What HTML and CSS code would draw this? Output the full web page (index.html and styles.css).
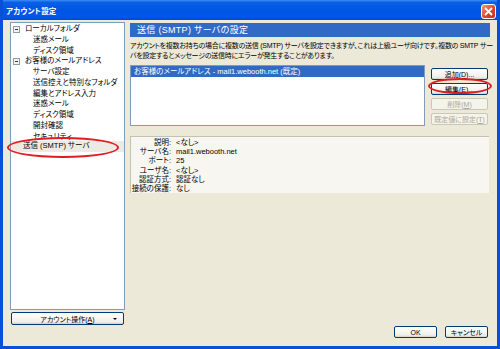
FILE: index.html
```html
<!DOCTYPE html>
<html lang="ja">
<head>
    <meta charset="UTF-8">
    <title>アカウント設定</title>
    <link rel="stylesheet" href="styles.css">
</head>
<body>
    <div class="window">
        <div class="titlebar">
            <span class="title">アカウント設定</span>
            <span class="close">
                <svg width="9" height="9" viewBox="0 0 9 9"><path d="M1 1 L8 8 M8 1 L1 8" stroke="#fff" stroke-width="1.8"/></svg>
            </span>
        </div>
        <div class="client">
            <div class="left">
                <ul class="tree">
                    <li class="root"><span class="toggle"></span>ローカルフォルダ</li>
                    <li class="child">迷惑メール</li>
                    <li class="child">ディスク領域</li>
                    <li class="root"><span class="toggle"></span>お客様のメールアドレス</li>
                    <li class="child">サーバ設定</li>
                    <li class="child">送信控えと特別なフォルダ</li>
                    <li class="child">編集とアドレス入力</li>
                    <li class="child">迷惑メール</li>
                    <li class="child">ディスク領域</li>
                    <li class="child">開封確認</li>
                    <li class="child">セキュリティ</li>
                    <li class="root selected">送信 (SMTP) サーバ</li>
                </ul>
                <button class="btn account-btn"><span>アカウント操作(<u>A</u>)</span><span class="arrow"></span></button>
            </div>
            <div class="right">
                <div class="heading">送信 (SMTP) サーバの設定</div>
                <p class="desc">アカウントを複数お持ちの場合に複数の送信 (SMTP) サーバを設定できますが、これは上級ユーザ向けです。複数の SMTP サー<br>バを設定するとメッセージの送信時にエラーが発生することがあります。</p>
                <div class="server-row">
                    <ul class="server-list">
                        <li class="selected">お客様のメールアドレス - mail1.webooth.net (既定)</li>
                    </ul>
                    <div class="side-buttons">
                        <button class="btn">追加(<u>D</u>)...</button>
                        <button class="btn">編集(<u>E</u>)...</button>
                        <button class="btn" disabled>削除(<u>M</u>)</button>
                        <button class="btn" disabled>既定値に設定(<u>T</u>)</button>
                    </div>
                </div>
                <dl class="details">
                    <dt>説明:</dt><dd>&lt;なし&gt;</dd>
                    <dt>サーバ名:</dt><dd>mail1.webooth.net</dd>
                    <dt>ポート:</dt><dd>25</dd>
                    <dt>ユーザ名:</dt><dd>&lt;なし&gt;</dd>
                    <dt>認証方式:</dt><dd>認証なし</dd>
                    <dt>接続の保護:</dt><dd>なし</dd>
                </dl>
                <div class="footer">
                    <button class="btn">OK</button>
                    <button class="btn">キャンセル</button>
                </div>
            </div>
        </div>
        <span class="mark mark-tree"></span>
        <span class="mark mark-edit"></span>
    </div>
</body>
</html>
```

FILE: styles.css
```css
body {
    margin: 0;
    font-family: "Liberation Sans", "Noto Sans CJK JP", sans-serif;
    font-feature-settings: "palt";
    font-size: 8px;
    color: #000;
}
.window {
    position: relative;
    width: 500px;
    height: 349px;
    box-sizing: border-box;
    background: #ECE9D8;
    border: 3px solid #0A4FD8;
    border-top: none;
    display: flex;
    flex-direction: column;
    overflow: hidden;
}
.titlebar {
    height: 20px;
    margin: 0 -3px;
    background: linear-gradient(#3C8CF6 0, #0A5FE6 12%, #0055E3 50%, #0057EA 85%, #0747C7 100%);
    display: flex;
    align-items: center;
    justify-content: space-between;
    padding: 0 4px 0 6px;
}
.title {
    color: white;
    font-weight: bold;
    font-size: 7.5px;
    letter-spacing: 0.2px;
}
.close {
    width: 13px;
    height: 13px;
    border: 1px solid #fff;
    border-radius: 3px;
    background: linear-gradient(135deg, #F09A7C, #E0462A 55%, #C5321A);
    display: flex;
    align-items: center;
    justify-content: center;
    margin-top: 2px;
}
.client {
    flex: 1;
    display: flex;
    gap: 5px;
    padding: 2px 7px 0 7px;
}
.left {
    width: 115px;
    display: flex;
    flex-direction: column;
    gap: 2px;
}
.tree {
    list-style: none;
    margin: 0;
    padding: 1px 0 0;
    height: 288px;
    box-sizing: border-box;
    background: white;
    border: 1px solid #7F9DB9;
    font-size: 7.5px;
}
.tree li {
    height: 10.75px;
    line-height: 10.75px;
    white-space: nowrap;
    display: flex;
    align-items: center;
}
.tree .root {
    padding-left: 2px;
}
.tree .child {
    padding-left: 22px;
}
.tree .selected {
    padding-left: 12px;
    background: #ECEAE2;
    height: 11px;
    margin-top: -1px;
}
.toggle {
    width: 5px;
    height: 5px;
    border: 1px solid #8C9DB5;
    margin-right: 5px;
    position: relative;
    background: #F4F4F0;
}
.toggle::after {
    content: "";
    position: absolute;
    left: 1px;
    top: 2px;
    width: 3px;
    height: 1px;
    background: #333;
}
.btn {
    font: inherit;
    font-size: 7px;
    height: 12px;
    padding: 0;
    border: 1px solid #003C74;
    border-radius: 2px;
    background: linear-gradient(#FFFFFF, #F0F0EA 80%, #D6D0C5);
    color: #000;
    display: flex;
    align-items: center;
    justify-content: center;
    white-space: nowrap;
}
.btn:disabled {
    border-color: #C9C7BA;
    background: #F5F4EA;
    color: #ACA899;
}
.account-btn {
    height: 13px;
    margin: 0 1px;
    position: relative;
}
.arrow {
    position: absolute;
    right: 6px;
    top: 5px;
    border-left: 2px solid transparent;
    border-right: 2px solid transparent;
    border-top: 2px solid #000;
}
.right {
    width: 360px;
    display: flex;
    flex-direction: column;
}
.heading {
    margin-top: 1px;
    height: 14px;
    line-height: 14px;
    background: #3169C6;
    color: white;
    font-size: 9px;
    padding-left: 7px;
    letter-spacing: 0.3px;
}
.desc {
    margin: 4px 0 0;
    line-height: 10px;
    font-size: 7px;
    letter-spacing: -0.25px;
    white-space: nowrap;
}
.server-row {
    margin-top: 4px;
    display: flex;
    gap: 6px;
}
.server-list {
    list-style: none;
    margin: 0;
    padding: 0;
    width: 295px;
    height: 61px;
    box-sizing: border-box;
    background: white;
    border: 1px solid #7F9DB9;
    font-size: 7.5px;
}
.server-list li {
    height: 11px;
    line-height: 11px;
    padding-left: 3px;
    white-space: nowrap;
}
.server-list .selected {
    background: #316AC5;
    color: white;
}
.side-buttons {
    width: 57px;
    margin-top: 3px;
    display: flex;
    flex-direction: column;
    gap: 3px;
}
.details {
    margin: 10px 1px 0 0;
    height: 57px;
    box-sizing: border-box;
    padding-top: 1px;
    background: #F7F6F1;
    border-top: 1px solid #C5C2B2;
    border-left: 1px solid #C5C2B2;
    display: grid;
    grid-template-columns: 40px auto;
    column-gap: 5px;
    grid-auto-rows: 9.2px;
    align-content: start;
    font-size: 7.5px;
    line-height: 9.2px;
}
.details dt {
    text-align: right;
    white-space: nowrap;
}
.details dd {
    margin: 0;
}
.footer {
    margin-top: auto;
    margin-bottom: 8px;
    display: flex;
    justify-content: flex-end;
    gap: 8px;
    padding-right: 2px;
}
.footer .btn {
    flex: none;
    width: 43px;
}
.mark {
    position: absolute;
    border: 2px solid #E31B23;
    border-radius: 50%;
    box-sizing: border-box;
}
.mark-tree {
    left: 4px;
    top: 137px;
    width: 112px;
    height: 21px;
}
.mark-edit {
    left: 425px;
    top: 78px;
    width: 64px;
    height: 16px;
}
```
